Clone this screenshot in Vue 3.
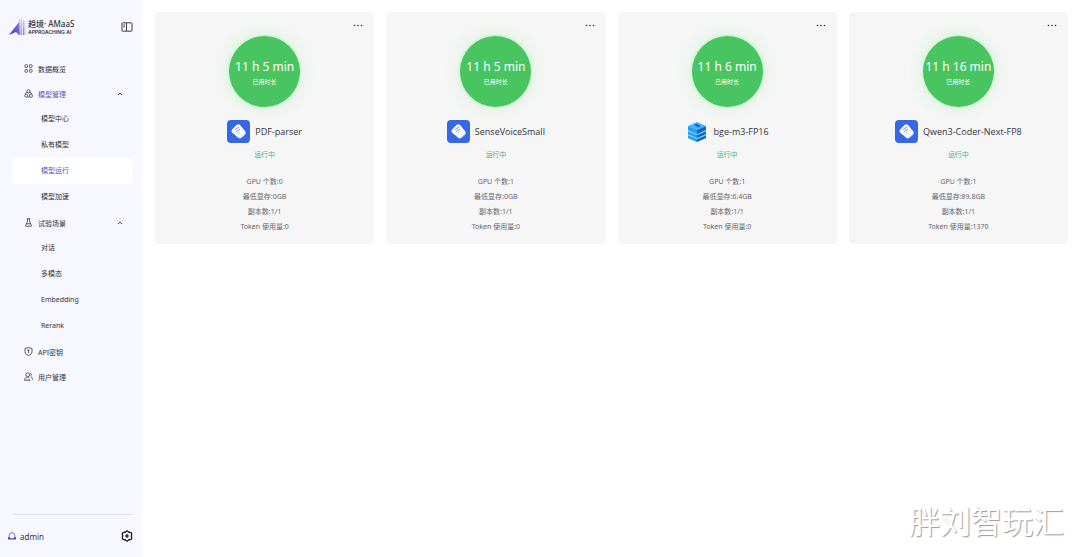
<script setup>
import { reactive } from 'vue'

const menu = reactive([
  { label: '数据概览', icon: 'grid' },
  {
    label: '模型管理', icon: 'model', active: true, open: true,
    children: ['模型中心', '私有模型', '模型运行', '模型加速'],
  },
  {
    label: '试验场景', icon: 'flask', open: true,
    children: ['对话', '多模态', 'Embedding', 'Rerank'],
  },
  { label: 'API密钥', icon: 'shield' },
  { label: '用户管理', icon: 'users' },
])
const current = '模型运行'

const cards = [
  { name: 'PDF-parser', time: '11 h 5 min', logo: 'doc', gpu: '0', mem: '0GB', rep: '1/1', token: '0' },
  { name: 'SenseVoiceSmall', time: '11 h 5 min', logo: 'doc', gpu: '1', mem: '0GB', rep: '1/1', token: '0' },
  { name: 'bge-m3-FP16', time: '11 h 6 min', logo: 'cube', gpu: '1', mem: '6.4GB', rep: '1/1', token: '0' },
  { name: 'Qwen3-Coder-Next-FP8', time: '11 h 16 min', logo: 'doc', gpu: '1', mem: '89.8GB', rep: '1/1', token: '1370' },
]
</script>

<template>
  <div class="app">
    <aside class="sidebar">
      <header class="brand">
        <svg class="brand-mark" viewBox="0 0 18 20" aria-hidden="true">
          <defs>
            <linearGradient id="markFill" x1="0" y1="1" x2="1" y2="0">
              <stop offset="0" stop-color="#3f2fc4" />
              <stop offset="1" stop-color="#8f7be8" />
            </linearGradient>
            <linearGradient id="barFill" x1="0" y1="0" x2="0" y2="1">
              <stop offset="0" stop-color="#dcd9e8" />
              <stop offset="1" stop-color="#8c7cd6" />
            </linearGradient>
          </defs>
          <path d="M1 18 11 5V18L8 15Z" fill="url(#markFill)" />
          <path d="M11 2h1.500v16H11zM13.200 0h1v18h-1zM15 3h1v15h-1zM16.600 4h.7v14h-.7z" fill="url(#barFill)" />
        </svg>
        <div class="brand-text">
          <strong>趋境· AMaaS</strong>
          <span>APPROACHING.AI</span>
        </div>
        <button class="icon-btn" type="button" aria-label="收起侧栏">
          <svg width="12" height="10" viewBox="0 0 12 10" fill="none" stroke="#3c3c46">
            <rect x="1" y=".8" width="10" height="8.400" rx=".8" />
            <path d="M5.500 1v8M2.300 3H4M2.300 4.800H4" />
          </svg>
        </button>
      </header>

      <nav>
        <ul class="menu">
          <li v-for="item in menu" :key="item.label">
            <button
              type="button"
              class="menu-item"
              :class="{ active: item.active }"
              @click="item.children && (item.open = !item.open)"
            >
              <svg class="menu-icon" viewBox="0 0 18 18" fill="none" stroke="#42424c" stroke-width="1.700" aria-hidden="true">
                <template v-if="item.icon === 'grid'">
                  <rect x="2" y="1.500" width="5" height="5.500" rx="1.300" /><rect x="11" y="1.500" width="5" height="5.500" rx="1.300" />
                  <rect x="2" y="11" width="5" height="5.500" rx="1.300" /><rect x="11" y="11" width="5" height="5.500" rx="1.300" />
                </template>
                <template v-else-if="item.icon === 'model'">
                  <path d="M9 1 12 3v3.500L9 8 6 6.500V3Z" />
                  <path d="M6 6 2.500 10M12 6l3.500 4" />
                  <circle cx="4.500" cy="13.500" r="3" /><rect x="11" y="10.500" width="5.500" height="6" rx="1.500" />
                  <path d="M7.500 16h3.500" />
                </template>
                <template v-else-if="item.icon === 'flask'">
                  <path d="M5.500 1.500h7M7 1.500v5L3 15.200c-.3.8 0 1.300.8 1.300h10.400c.8 0 1.100-.5.8-1.300L11 6.500v-5M5 11.500h8" />
                </template>
                <template v-else-if="item.icon === 'shield'">
                  <path d="M9 1 16 3v6.500c0 4-3 6-7 7.500-4-1.500-7-3.500-7-7.500V3Z" />
                  <path d="M6.800 6h4.400M9 6v6" />
                </template>
                <template v-else>
                  <circle cx="7.500" cy="5.500" r="3.800" />
                  <path d="M1 16.500c.4-4 3-6 6-6 1.500 0 2.500.4 3.500 1.200M12 2.200c3.300.6 3.600 5 .6 6.200M14 9.500c1.800 1 2.700 3 3 6M1 16.500h11l-2.500-3" />
                </template>
              </svg>
              <span>{{ item.label }}</span>
              <svg v-if="item.children" class="caret" :class="{ closed: !item.open }" viewBox="0 0 6 4" fill="none" stroke="#42424c" aria-hidden="true">
                <path d="M1 3 3 1l2 2" />
              </svg>
            </button>
            <ul v-if="item.children && item.open" class="submenu">
              <li v-for="child in item.children" :key="child">
                <a href="#" :class="{ current: child === current }" @click.prevent>{{ child }}</a>
              </li>
            </ul>
          </li>
        </ul>
      </nav>

      <footer class="account">
        <svg width="8" height="8" viewBox="0 0 8 8" fill="none" aria-hidden="true">
          <path d="M1.200 6V3.200Q1.200.7 4 .7t2.800 2.500V6" stroke="#8174c8" />
          <path d="M0 5.200h2.200v1h3.600v-1H8V7.500H0Z" fill="#5846b4" />
        </svg>
        <span>admin</span>
        <button class="icon-btn" type="button" aria-label="设置">
          <svg width="12" height="12" viewBox="0 0 12 12" fill="none" stroke="#1e1e26" stroke-width="1.300">
            <path d="M6 .8 7.500 2l3 .8.2 2L10.200 6l.5 1.200-.2 2-3 .8L6 11.200 4.500 10l-3-.8-.2-2L1.800 6l-.5-1.200.2-2 3-.8Z" stroke-linejoin="round" />
            <circle cx="6" cy="6" r="1" />
          </svg>
        </button>
      </footer>
    </aside>

    <main class="cards">
      <article v-for="card in cards" :key="card.name" class="card">
        <button class="more" type="button" aria-label="更多操作">
          <svg width="10" height="4" viewBox="0 0 10 4" fill="#2c2c2c"><circle cx="1.500" cy="2.500" r=".8" /><circle cx="5" cy="2.500" r=".8" /><circle cx="8.500" cy="2.500" r=".8" /></svg>
        </button>
        <div class="dial">
          <b>{{ card.time }}</b>
          <span>已用时长</span>
        </div>
        <h2 class="title">
          <svg v-if="card.logo === 'doc'" width="23" height="23" viewBox="0 0 23 23" aria-hidden="true">
            <rect width="23" height="23" rx="4" fill="#3568e4" />
            <path d="M12 5.500 18.300 12q1.200 1.500 0 2.800L14.500 18q-1.500 1.200-3 0L7 13Z" fill="#b9ccff" />
            <path d="M9.800 4.800q1.800-1.200 3.200.2l5 6q1 1.300-.2 2.500l-4.200 4q-1.300 1-2.600 0L5 12.500q-1.200-1.500.2-3Z" fill="#fff" />
            <path d="m7.800 9.800 4.200-2.700M9 11.800l4-2.600M10.800 13.300l1.600-1" stroke="#6285df" stroke-width=".9" />
          </svg>
          <svg v-else width="23" height="23" viewBox="0 0 23 23" aria-hidden="true">
            <path d="m2 6 9 4 9-4v12l-9 4-9-4Z" fill="#80cdfc" />
            <path d="m2 6 9 3.800V14L2 10Z" fill="#249cf4" /><path d="m2 11.500 9 3.800V18l-9-4ZM2 15.500l9 3.800V22l-9-4Z" fill="#249cf4" />
            <path d="m20 6-9 3.800V14l9-4Z" fill="#1265c5" /><path d="m20 11.500-9 3.800V18l9-4ZM20 15.500l-9 3.800V22l9-4Z" fill="#1265c5" />
            <path d="m11 2 9 4-9 4-9-4Z" fill="#42b5fa" />
            <path d="m8 5 3-1.200 1.500 1.300L15 6l-3 1.500-1.500-1.300Z" fill="#1265c5" />
          </svg>
          <span>{{ card.name }}</span>
        </h2>
        <p class="status">运行中</p>
        <ul class="facts">
          <li>GPU 个数:{{ card.gpu }}</li>
          <li>最低显存:{{ card.mem }}</li>
          <li>副本数:{{ card.rep }}</li>
          <li>Token 使用量:{{ card.token }}</li>
        </ul>
      </article>
    </main>

    <div class="watermark">胖刘智玩汇</div>
  </div>
</template>

<style>
body {
  margin: 0;
  background: #fff;
}
</style>

<style scoped>
.app {
  position: relative;
  display: flex;
  min-height: 100vh;
  font-family: "Noto Sans", "Noto Sans CJK SC", sans-serif;
  font-size: 7px;
  color: #33333b;
}
ul, p, h2 {
  margin: 0;
  padding: 0;
  list-style: none;
}
button {
  padding: 0;
  border: 0;
  background: none;
  font: inherit;
  color: inherit;
  cursor: pointer;
}
svg {
  display: block;
  flex: none;
}
.sidebar {
  display: flex;
  flex: none;
  flex-direction: column;
  box-sizing: border-box;
  width: 143px;
  padding: 16px 10px 15px 8px;
  background: linear-gradient(90deg, #f6f7ff 92%, #fbfbff);
}
.brand {
  display: flex;
  align-items: center;
  height: 22px;
  margin-bottom: 18px;
}
.brand-mark {
  width: 18px;
  height: 20px;
}
.brand-text {
  flex: 1;
  margin-left: 2px;
}
.brand-text strong,
.brand-text span {
  display: block;
}
.brand-text strong {
  font-size: 8px;
  font-weight: 500;
  line-height: 10px;
}
.brand-text span {
  font-family: Inter, "Noto Sans", sans-serif;
  font-size: 5px;
  font-weight: 600;
  line-height: 7px;
}
.menu-item {
  display: flex;
  align-items: center;
  width: 100%;
  height: 25px;
  padding: 0 10px 0 16px;
  text-align: left;
}
.menu-item span {
  flex: 1;
}
.menu-item.active span {
  color: #6250c8;
}
.menu-icon {
  width: 9px;
  height: 9px;
  margin-right: 5px;
}
.caret {
  width: 6px;
  height: 4px;
}
.caret.closed {
  transform: rotate(180deg);
}
.submenu a {
  display: block;
  height: 26px;
  margin-left: 4px;
  padding-left: 29px;
  border-radius: 4px;
  line-height: 26px;
  color: inherit;
  text-decoration: none;
}
.submenu a.current {
  background: #fff;
  color: #6250c8;
}
.account {
  display: flex;
  align-items: center;
  gap: 4px;
  margin-top: auto;
  padding-top: 16px;
  background: linear-gradient(#dfe0f0, #dfe0f0) 5px 0 / 100% 1px no-repeat;
  font-size: 8px;
}
.account span {
  flex: 1;
}
.cards {
  display: grid;
  flex: 1;
  grid-template-columns: repeat(4, minmax(0, 1fr));
  align-items: start;
  gap: 12px;
  padding: 12px;
}
.card {
  display: flex;
  flex-direction: column;
  align-items: center;
  padding: 11px 11px 10px;
  border-radius: 4px;
  background: #f6f6f6;
}
.more {
  align-self: flex-end;
}
.dial {
  display: flex;
  flex-direction: column;
  align-items: center;
  box-sizing: border-box;
  width: 71px;
  height: 71px;
  margin-top: 9px;
  padding-top: 21px;
  border-radius: 50%;
  background: #48c461;
  box-shadow: 0 0 3px #b9efc2, 0 0 18px #cdf0d3;
  color: #fff;
  white-space: nowrap;
}
.dial b {
  font-size: 12px;
  font-weight: 400;
  line-height: 20px;
}
.dial span {
  font-size: 6px;
  line-height: 11px;
}
.title {
  display: flex;
  align-items: center;
  gap: 5px;
  height: 24px;
  margin-top: 12px;
  font-family: "Open Sans", "Noto Sans CJK SC", sans-serif;
  font-size: 9px;
  font-weight: 400;
  white-space: nowrap;
}
.status {
  margin-top: 4px;
  line-height: 15px;
  color: #41b878;
}
.facts {
  margin-top: 12px;
  line-height: 15px;
  text-align: center;
  color: #66666c;
}
.watermark {
  position: absolute;
  right: 16px;
  bottom: 14px;
  font-size: 31px;
  line-height: 44px;
  color: #fff;
  text-shadow: 1px 1px 1px #999;
  pointer-events: none;
}
</style>
